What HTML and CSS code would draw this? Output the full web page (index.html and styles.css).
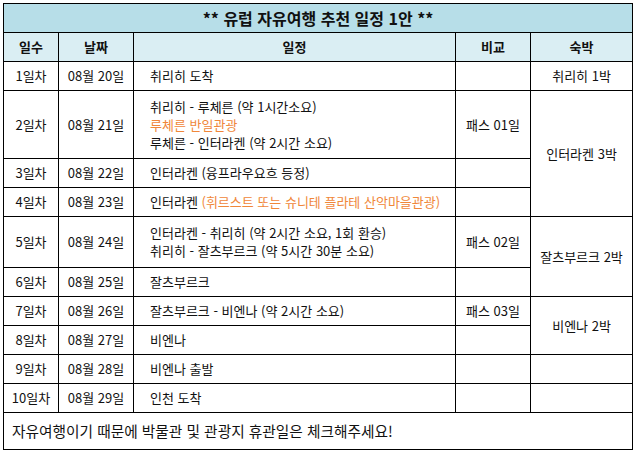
FILE: index.html
```html
<!DOCTYPE html>
<html lang="ko">
<head>
<meta charset="utf-8">
<link rel="stylesheet" href="styles.css">
</head>
<body>
<table class="plan">
  <colgroup>
    <col class="c-day">
    <col class="c-date">
    <col class="c-sched">
    <col class="c-note">
    <col class="c-stay">
  </colgroup>
  <tr class="r-title"><td colspan="5" class="title">** 유럽 자유여행 추천 일정 1안 **</td></tr>
  <tr class="r-head">
    <th>일수</th><th>날짜</th><th>일정</th><th>비교</th><th>숙박</th>
  </tr>
  <tr class="r1">
    <td class="ctr">1일차</td><td class="ctr">08월 20일</td><td class="sched">취리히 도착</td><td></td><td class="ctr">취리히 1박</td>
  </tr>
  <tr class="r3l">
    <td class="ctr">2일차</td><td class="ctr">08월 21일</td>
    <td class="sched">취리히 - 루체른 (약 1시간소요)<br><span class="hl">루체른 반일관광</span><br>루체른 - 인터라켄 (약 2시간 소요)</td>
    <td class="ctr">패스 01일</td>
    <td class="ctr" rowspan="3">인터라켄 3박</td>
  </tr>
  <tr class="r1">
    <td class="ctr">3일차</td><td class="ctr">08월 22일</td><td class="sched">인터라켄 (융프라우요흐 등정)</td><td></td>
  </tr>
  <tr class="r1">
    <td class="ctr">4일차</td><td class="ctr">08월 23일</td><td class="sched">인터라켄 <span class="hl">(휘르스트 또는 슈니테 플라테 산악마을관광)</span></td><td></td>
  </tr>
  <tr class="r2l">
    <td class="ctr">5일차</td><td class="ctr">08월 24일</td>
    <td class="sched">인터라켄 - 취리히 (약 2시간 소요, 1회 환승)<br>취리히 - 잘츠부르크 (약 5시간 30분 소요)</td>
    <td class="ctr">패스 02일</td>
    <td class="ctr" rowspan="2">잘츠부르크 2박</td>
  </tr>
  <tr class="r1">
    <td class="ctr">6일차</td><td class="ctr">08월 25일</td><td class="sched">잘츠부르크</td><td></td>
  </tr>
  <tr class="r1">
    <td class="ctr">7일차</td><td class="ctr">08월 26일</td><td class="sched">잘츠부르크 - 비엔나 (약 2시간 소요)</td><td class="ctr">패스 03일</td>
    <td class="ctr" rowspan="2">비엔나 2박</td>
  </tr>
  <tr class="r1">
    <td class="ctr">8일차</td><td class="ctr">08월 27일</td><td class="sched">비엔나</td><td></td>
  </tr>
  <tr class="r1">
    <td class="ctr">9일차</td><td class="ctr">08월 28일</td><td class="sched">비엔나 출발</td><td></td><td></td>
  </tr>
  <tr class="r1">
    <td class="ctr">10일차</td><td class="ctr">08월 29일</td><td class="sched">인천 도착</td><td></td><td></td>
  </tr>
  <tr class="r-foot">
    <td colspan="5" class="foot">자유여행이기 때문에 박물관 및 관광지 휴관일은 체크해주세요!</td>
  </tr>
</table>
</body>
</html>
```

FILE: styles.css
```css
html, body {
  margin: 0;
  padding: 0;
  background: #ffffff;
}

body {
  font-family: "Noto Sans CJK KR", "Noto Sans", sans-serif;
  font-size: 13px;
  color: #111111;
}

.plan {
  margin: 3px;
  border-collapse: collapse;
  table-layout: fixed;
  width: 630px;
}

.c-day { width: 55px; }
.c-date { width: 75px; }
.c-sched { width: 322px; }
.c-note { width: 75px; }
.c-stay { width: 102px; }

.plan td,
.plan th {
  border: 1px solid #000000;
  padding: 0;
  line-height: 18px;
  vertical-align: middle;
}

.r-title { height: 29px; }
.r-head { height: 29px; }
.r1 { height: 29px; }
.r3l { height: 68px; }
.r2l { height: 51px; }
.r-foot { height: 37px; }

.title {
  background: #b7dee8;
  text-align: center;
  font-size: 16px;
  font-weight: bold;
}

.r-head th {
  background: #daeef3;
  font-weight: bold;
  text-align: center;
}

.ctr {
  text-align: center;
}

.sched {
  padding-left: 16px !important;
  text-align: left;
}

.hl {
  color: #f0873a;
}

.foot {
  padding-left: 8px !important;
  font-size: 14.7px;
}
```
